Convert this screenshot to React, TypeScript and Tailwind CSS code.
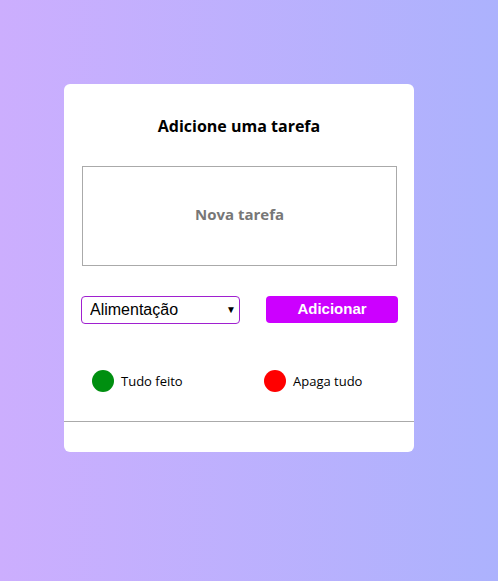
import { useState } from 'react'

const categories = ['Alimentação', 'Trabalho', 'Estudos', 'Lazer']

export default function App() {
  const [task, setTask] = useState('')
  const [category, setCategory] = useState(categories[0])

  return (
    <div className="min-h-[581px] w-full bg-gradient-to-r from-[#ccaefe] to-[#acb2fd] pt-[84px] font-['Open_Sans',sans-serif]">
      <div className="ml-[64px] w-[350px] h-[368px] rounded-[6px] bg-white flex flex-col">
        <h1 className="pt-[31px] text-center text-[16px] leading-[22px] font-bold text-black">
          Adicione uma tarefa
        </h1>

        <textarea
          value={task}
          onChange={e => setTask(e.target.value)}
          placeholder="Nova tarefa"
          className="shrink-0 mt-[29px] ml-[18px] w-[315px] h-[100px] resize-none border border-[#aaaaaa] pt-[36px] px-3 text-center text-[15px] leading-[22px] font-bold text-[#777777] placeholder-[#777777] outline-none"
        />

        <div className="mt-[30px] flex items-start justify-between pl-[17px] pr-[16px]">
          <div className="relative">
            <select
              value={category}
              onChange={e => setCategory(e.target.value)}
              className="appearance-none w-[159px] h-[28px] rounded-[4px] border border-[#a020d0] bg-white pl-[8px] pr-6 font-['Liberation_Sans',Arial,sans-serif] text-[16px] text-black outline-none"
            >
              {categories.map(c => (
                <option key={c} value={c}>{c}</option>
              ))}
            </select>
            <span className="pointer-events-none absolute right-[4px] top-[6px] text-[10px] leading-[14px] text-black">▼</span>
          </div>
          <button
            type="button"
            className="w-[132px] h-[27px] rounded-[4px] bg-[#cc00ff] font-['Liberation_Sans',Arial,sans-serif] text-[15px] font-bold text-white"
          >
            Adicionar
          </button>
        </div>

        <div className="mt-[46px] flex items-center pl-[28px]">
          <div className="flex items-center w-[172px]">
            <span className="w-[22px] h-[22px] rounded-full bg-[#008f10]" />
            <span className="ml-[7px] text-[13px] leading-[18px] text-black">Tudo feito</span>
          </div>
          <div className="flex items-center">
            <span className="w-[22px] h-[22px] rounded-full bg-[#ff0000]" />
            <span className="ml-[7px] text-[13px] leading-[18px] text-black">Apaga tudo</span>
          </div>
        </div>

        <div className="mt-[29px] border-t border-[#aaaaaa]" />
      </div>
    </div>
  )
}
